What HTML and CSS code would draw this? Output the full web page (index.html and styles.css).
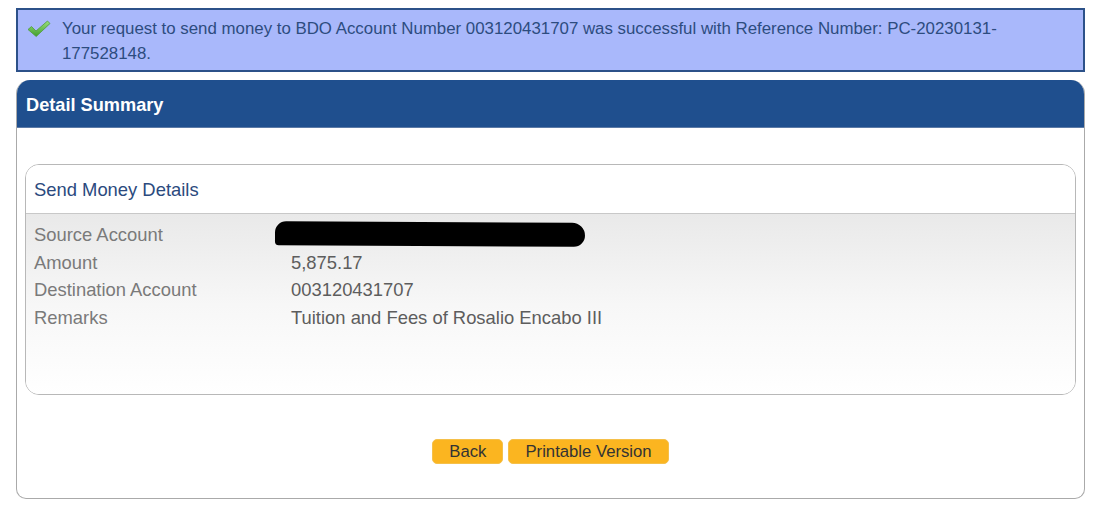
FILE: index.html
```html
<!DOCTYPE html>
<html>
<head>
<meta charset="utf-8">
<link rel="stylesheet" href="styles.css">
</head>
<body>
<div class="page">
  <div class="alert">
    <svg class="check" width="24" height="20" viewBox="0 0 24 20">
      <defs>
        <linearGradient id="g" x1="0" y1="0" x2="0" y2="1">
          <stop offset="0" stop-color="#9be07a"/>
          <stop offset="1" stop-color="#3f9e2c"/>
        </linearGradient>
      </defs>
      <path d="M1 10.5 L4.5 7.5 L9 12 L20.5 2 L23 4.5 L9.2 17.5 Z" fill="url(#g)" stroke="#4f9a3a" stroke-width="0.8" stroke-linejoin="round"/>
    </svg>
    <p class="alert-text">Your request to send money to BDO Account Number 003120431707 was successful with Reference Number: PC-20230131-177528148.</p>
  </div>

  <div class="panel">
    <div class="panel-head">Detail Summary</div>
    <div class="panel-body">
      <div class="box">
        <div class="box-head">Send Money Details</div>
        <div class="box-body">
          <div class="row"><span class="label">Source Account</span><span class="value"><span class="redact"></span></span></div>
          <div class="row"><span class="label">Amount</span><span class="value">5,875.17</span></div>
          <div class="row"><span class="label">Destination Account</span><span class="value">003120431707</span></div>
          <div class="row"><span class="label">Remarks</span><span class="value">Tuition and Fees of Rosalio Encabo III</span></div>
        </div>
      </div>
      <div class="actions">
        <button class="btn">Back</button>
        <button class="btn">Printable Version</button>
      </div>
    </div>
  </div>
</div>
</body>
</html>
```
FILE: styles.css
```css
* { box-sizing: border-box; }
html, body { margin: 0; padding: 0; background: #fff; }
body { font-family: "Liberation Sans", Arial, sans-serif; }

.page {
  width: 1069px;
  margin-left: 16px;
  padding-top: 8px;
}

.alert {
  display: flex;
  align-items: flex-start;
  height: 64px;
  background: #a9b8fb;
  border: 2px solid #2c5189;
  padding: 6px 10px 0 9px;
}
.check { margin-top: 3px; margin-right: 11px; flex: none; }
.alert-text {
  margin: 0;
  font-size: 16.85px;
  line-height: 25px;
  color: #2d4c7f;
}

.panel {
  margin-top: 8px;
  height: 419px;
  border: 1px solid #aaa;
  border-top: none;
  border-radius: 14px 14px 10px 10px;
  overflow: hidden;
}
.panel-head {
  height: 48px;
  background: #1f4f8e;
  color: #fff;
  font-weight: bold;
  font-size: 18.2px;
  padding: 15px 9px 0;
  border-bottom: 1px solid #5c7aa6;
}
.panel-body {
  padding: 36px 8px 0;
}

.box {
  height: 231px;
  border: 1px solid #b8b8b8;
  border-radius: 14px;
  overflow: hidden;
}
.box-head {
  height: 49px;
  padding: 14px 8px 0;
  font-size: 18.4px;
  color: #2b4a7e;
  background: #fff;
  border-bottom: 1px solid #c8c8c8;
}
.box-body {
  height: 181px;
  padding: 7px 8px 0;
  background: linear-gradient(to bottom, #e9e9e9 0%, #f7f7f7 50%, #ffffff 100%);
}
.row {
  display: grid;
  grid-template-columns: 257px 1fr;
  font-size: 18.4px;
  line-height: 27.6px;
}
.label { color: #7a7a7a; }
.value { color: #5d5d5d; }
.redact {
  display: inline-block;
  width: 310px;
  height: 24px;
  margin-left: -16px;
  vertical-align: -5px;
  background: #000;
  border-radius: 12px 14px 12px 4px;
  transform: rotate(0.3deg);
}

.actions {
  display: flex;
  justify-content: center;
  gap: 5px;
  margin-top: 44px;
}
.btn {
  height: 25px;
  padding: 0 16px;
  border: 1px solid #f5c04a;
  border-radius: 5px;
  background: #fbb520;
  color: #333;
  font-family: "Liberation Sans", Arial, sans-serif;
  font-size: 16.7px;
  line-height: 23px;
}
```
